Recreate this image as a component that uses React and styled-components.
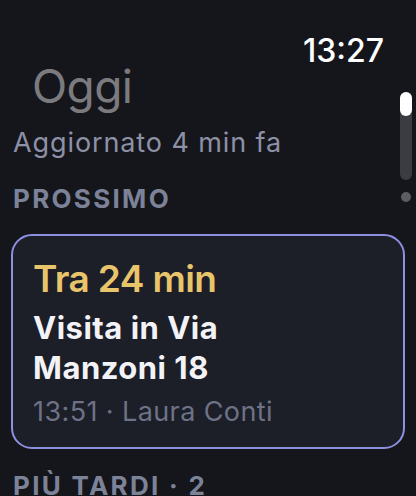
import React from "react";
import styled, { createGlobalStyle } from "styled-components";

const Global = createGlobalStyle`
  html, body { margin: 0; padding: 0; background: #15161c; }
  body { font-family: Inter, "Noto Sans", sans-serif; -webkit-font-smoothing: antialiased; }
`;

const Screen = styled.div`
  position: relative;
  width: 416px;
  height: 496px;
  overflow: hidden;
  background: #15161c;
  box-sizing: border-box;
  padding: 0 11px 0 13px;
  display: flex;
  flex-direction: column;
`;

const StatusBar = styled.div`
  display: flex;
  justify-content: flex-end;
  padding: 32px 21px 0 0;
  height: 38px;
`;

const Clock = styled.div`
  font-size: 32px;
  font-weight: 500;
  color: #ffffff;
  line-height: 38px;
  letter-spacing: 0px;
`;

const Title = styled.h1`
  margin: -9px 0 0 0;
  padding-left: 19px;
  font-size: 46px;
  font-weight: 400;
  color: #7b7b7f;
  line-height: 50px;
  letter-spacing: -0.6px;
`;

const Subtitle = styled.div`
  margin-top: 16px;
  font-size: 27px;
  color: #8d91a6;
  line-height: 32px;
  letter-spacing: 0.9px;
`;

const SectionLabel = styled.div`
  margin-top: ${(p) => p.$gap}px;
  font-size: 26px;
  font-weight: 700;
  letter-spacing: 2.3px;
  color: #7c8399;
  line-height: 30px;
  text-transform: uppercase;
`;

const Card = styled.div`
  margin-top: 20px;
  width: 394px;
  margin-left: -2px;
  box-sizing: border-box;
  border: 2px solid #8d8fdf;
  border-radius: 21px;
  background: #1c1e28;
  padding: 22px 20px 19px 20px;
  display: flex;
  flex-direction: column;
`;

const Eta = styled.div`
  font-size: 37px;
  font-weight: 600;
  color: #e8c46b;
  line-height: 42px;
  letter-spacing: -0.6px;
`;

const EventTitle = styled.div`
  margin-top: 8px;
  font-size: 31px;
  font-weight: 700;
  color: #f3f3f7;
  line-height: 40px;
  letter-spacing: 0.5px;
`;

const Meta = styled.div`
  margin-top: 8px;
  font-size: 27px;
  color: #6d7286;
  line-height: 32px;
  letter-spacing: 0.4px;
`;

const ScrollTrack = styled.div`
  position: absolute;
  top: 92px;
  left: 400px;
  width: 12px;
  height: 88px;
  border-radius: 6px;
  background: #3b3b42;
`;

const ScrollThumb = styled.div`
  width: 12px;
  height: 24px;
  border-radius: 6px;
  background: #ffffff;
`;

const ScrollDot = styled.div`
  position: absolute;
  top: 192px;
  left: 401px;
  width: 10px;
  height: 10px;
  border-radius: 50%;
  background: #5c5c62;
`;

export default function App() {
  return (
    <>
      <Global />
      <Screen>
        <StatusBar>
          <Clock>13:27</Clock>
        </StatusBar>
        <Title>Oggi</Title>
        <Subtitle>Aggiornato 4 min fa</Subtitle>
        <SectionLabel $gap={25}>Prossimo</SectionLabel>
        <Card>
          <Eta>Tra 24 min</Eta>
          <EventTitle>
            Visita in Via
            <br />
            Manzoni 18
          </EventTitle>
          <Meta>13:51 · Laura Conti</Meta>
        </Card>
        <SectionLabel $gap={22}>Più tardi · 2</SectionLabel>
        <ScrollTrack>
          <ScrollThumb />
        </ScrollTrack>
        <ScrollDot />
      </Screen>
    </>
  );
}
